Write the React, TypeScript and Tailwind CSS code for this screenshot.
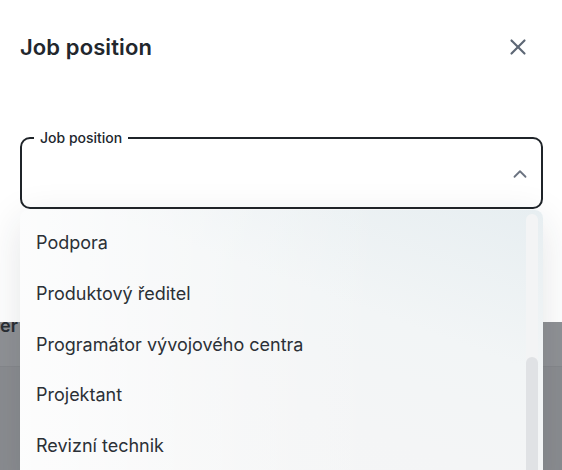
import { X, ChevronUp } from 'lucide-react';

const options = [
  'Podpora',
  'Produktový ředitel',
  'Programátor vývojového centra',
  'Projektant',
  'Revizní technik',
];

export default function App() {
  return (
    <div
      className="relative h-[470px] w-[562px] overflow-hidden bg-[#8a8c90]"
      style={{ fontFamily: 'Inter, "Noto Sans", sans-serif' }}
    >
      {/* page behind the sheet */}
      <div className="flex h-full flex-col">
        <div className="h-[322px]" />
        <div className="h-[45px] border-b border-[#85878b] bg-[#8f9195]" />
        <div className="flex-1" />
      </div>
      <span className="absolute left-0 top-[312px] text-[18px] font-semibold text-[#2a2e33]">er</span>

      {/* sheet */}
      <div className="absolute inset-x-0 top-0 h-[322px] bg-white pl-5 pr-[19px]">
        <div className="flex h-[94px] items-start justify-between pt-[33px]">
          <h2 className="text-[22px] font-semibold leading-7 tracking-[0.1px] text-[#22272d]">Job position</h2>
          <button className="mr-[12px] mt-[1px] text-[#5d6775]">
            <X size={26} strokeWidth={2} />
          </button>
        </div>

        <div className="mt-[43px]">
          <div className="relative flex h-[72px] items-center justify-end rounded-[10px] border-2 border-[#1f2429] pr-[10px]">
            <span className="absolute left-[12px] top-[-11px] bg-white px-[6px] text-[14px] font-medium leading-5 text-[#22272d]">
              Job position
            </span>
            <ChevronUp size={22} strokeWidth={2} className="mt-[1px] text-[#6b7380]" />
          </div>
        </div>
      </div>

      {/* dropdown menu */}
      <div className="absolute left-[20px] top-[210px] h-[280px] w-[523px] overflow-hidden rounded-[8px] bg-[linear-gradient(200deg,#e7eef1_0%,#f2f5f6_35%,#f4f5f6_60%,#f5f6f6_100%)] shadow-[0_10px_40px_rgba(30,40,50,0.12)]">
        <div className="absolute inset-0 bg-[linear-gradient(90deg,rgba(255,255,255,0.75)_0%,rgba(255,255,255,0.2)_45%,rgba(255,255,255,0)_70%)]" />
        <ul className="relative pt-[8px]">
          {options.map((o) => (
            <li
              key={o}
              className="flex h-[50.7px] items-center pl-[16px] text-[18px] leading-6 text-[#2b3036]"
            >
              {o}
            </li>
          ))}
        </ul>
        <div className="absolute right-[5px] top-[4px] bottom-0 w-[12px] rounded-t-full bg-[#f3f4f5]">
          <div className="absolute inset-x-0 top-[143px] bottom-0 rounded-t-full bg-[#e0e2e5]" />
        </div>
      </div>
    </div>
  );
}
